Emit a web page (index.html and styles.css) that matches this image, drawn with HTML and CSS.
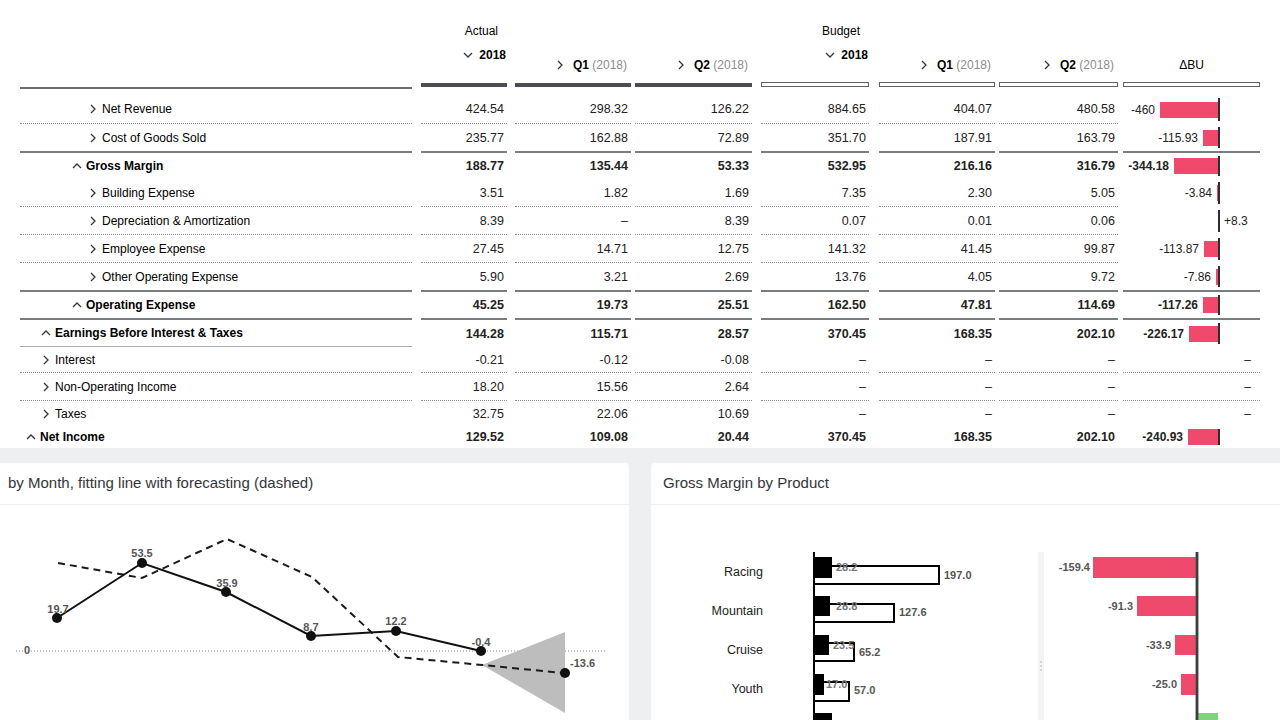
FILE: index.html
```html
<!DOCTYPE html>
<html>
<head>
<meta charset="utf-8">
<link rel="stylesheet" href="styles.css">
</head>
<body>
<div class="table">
  <div class="row hrow">
    <div class="hlabel"></div>
    <div class="hcell">
      <div class="hname">Actual</div>
      <div class="hyear"><svg class="ic dn" viewBox="0 0 12 12"><path d="M2 4l4 4 4-4"/></svg>2018</div>
      <div class="bar-a"></div>
    </div>
    <div class="hcell">
      <div class="hq"><svg class="ic" viewBox="0 0 12 12"><path d="M4 2l4 4-4 4"/></svg><b>Q1</b>&nbsp;<span class="gray">(2018)</span></div>
      <div class="bar-a"></div>
    </div>
    <div class="hcell">
      <div class="hq"><svg class="ic" viewBox="0 0 12 12"><path d="M4 2l4 4-4 4"/></svg><b>Q2</b>&nbsp;<span class="gray">(2018)</span></div>
      <div class="bar-a"></div>
    </div>
    <div class="hcell">
      <div class="hname">Budget</div>
      <div class="hyear"><svg class="ic dn" viewBox="0 0 12 12"><path d="M2 4l4 4 4-4"/></svg>2018</div>
      <div class="bar-b"></div>
    </div>
    <div class="hcell">
      <div class="hq"><svg class="ic" viewBox="0 0 12 12"><path d="M4 2l4 4-4 4"/></svg><b>Q1</b>&nbsp;<span class="gray">(2018)</span></div>
      <div class="bar-b"></div>
    </div>
    <div class="hcell">
      <div class="hq"><svg class="ic" viewBox="0 0 12 12"><path d="M4 2l4 4-4 4"/></svg><b>Q2</b>&nbsp;<span class="gray">(2018)</span></div>
      <div class="bar-b"></div>
    </div>
    <div class="hcell">
      <div class="hq hc">ΔBU</div>
      <div class="bar-b"></div>
    </div>
  </div>

  <div class="row r1 dot">
    <div class="lbl l3"><svg class="ic" viewBox="0 0 12 12"><path d="M4 2l4 4-4 4"/></svg>Net Revenue</div>
    <div class="c">424.54</div><div class="c">298.32</div><div class="c">126.22</div>
    <div class="c">884.65</div><div class="c">404.07</div><div class="c">480.58</div>
    <div class="d nb"><div class="neg"><span>-460</span><i class="bar" style="width:58px"></i></div><b class="axis"></b><div class="pos"></div></div>
  </div>

  <div class="row r2 sol">
    <div class="lbl l3"><svg class="ic" viewBox="0 0 12 12"><path d="M4 2l4 4-4 4"/></svg>Cost of Goods Sold</div>
    <div class="c">235.77</div><div class="c">162.88</div><div class="c">72.89</div>
    <div class="c">351.70</div><div class="c">187.91</div><div class="c">163.79</div>
    <div class="d"><div class="neg"><span>-115.93</span><i class="bar" style="width:15px"></i></div><b class="axis"></b><div class="pos"></div></div>
  </div>

  <div class="row r3 bold">
    <div class="lbl l2"><svg class="ic" viewBox="0 0 12 12"><path d="M2 8l4-4 4 4"/></svg>Gross Margin</div>
    <div class="c">188.77</div><div class="c">135.44</div><div class="c">53.33</div>
    <div class="c">532.95</div><div class="c">216.16</div><div class="c">316.79</div>
    <div class="d"><div class="neg"><span>-344.18</span><i class="bar" style="width:44px"></i></div><b class="axis"></b><div class="pos"></div></div>
  </div>

  <div class="row r4 dot">
    <div class="lbl l3"><svg class="ic" viewBox="0 0 12 12"><path d="M4 2l4 4-4 4"/></svg>Building Expense</div>
    <div class="c">3.51</div><div class="c">1.82</div><div class="c">1.69</div>
    <div class="c">7.35</div><div class="c">2.30</div><div class="c">5.05</div>
    <div class="d nb"><div class="neg"><span>-3.84</span><i class="bar" style="width:1px"></i></div><b class="axis"></b><div class="pos"></div></div>
  </div>

  <div class="row r4 dot">
    <div class="lbl l3"><svg class="ic" viewBox="0 0 12 12"><path d="M4 2l4 4-4 4"/></svg>Depreciation &amp; Amortization</div>
    <div class="c">8.39</div><div class="c">–</div><div class="c">8.39</div>
    <div class="c">0.07</div><div class="c">0.01</div><div class="c">0.06</div>
    <div class="d nb"><div class="neg"></div><b class="axis"></b><div class="pos"><span>+8.3</span></div></div>
  </div>

  <div class="row r4 dot">
    <div class="lbl l3"><svg class="ic" viewBox="0 0 12 12"><path d="M4 2l4 4-4 4"/></svg>Employee Expense</div>
    <div class="c">27.45</div><div class="c">14.71</div><div class="c">12.75</div>
    <div class="c">141.32</div><div class="c">41.45</div><div class="c">99.87</div>
    <div class="d nb"><div class="neg"><span>-113.87</span><i class="bar" style="width:14px"></i></div><b class="axis"></b><div class="pos"></div></div>
  </div>

  <div class="row r7 sol">
    <div class="lbl l3"><svg class="ic" viewBox="0 0 12 12"><path d="M4 2l4 4-4 4"/></svg>Other Operating Expense</div>
    <div class="c">5.90</div><div class="c">3.21</div><div class="c">2.69</div>
    <div class="c">13.76</div><div class="c">4.05</div><div class="c">9.72</div>
    <div class="d"><div class="neg"><span>-7.86</span><i class="bar" style="width:2px"></i></div><b class="axis"></b><div class="pos"></div></div>
  </div>

  <div class="row r8 sol bold">
    <div class="lbl l2"><svg class="ic" viewBox="0 0 12 12"><path d="M2 8l4-4 4 4"/></svg>Operating Expense</div>
    <div class="c">45.25</div><div class="c">19.73</div><div class="c">25.51</div>
    <div class="c">162.50</div><div class="c">47.81</div><div class="c">114.69</div>
    <div class="d"><div class="neg"><span>-117.26</span><i class="bar" style="width:15px"></i></div><b class="axis"></b><div class="pos"></div></div>
  </div>

  <div class="row r9 bold">
    <div class="lbl l1 thin"><svg class="ic" viewBox="0 0 12 12"><path d="M2 8l4-4 4 4"/></svg>Earnings Before Interest &amp; Taxes</div>
    <div class="c">144.28</div><div class="c">115.71</div><div class="c">28.57</div>
    <div class="c">370.45</div><div class="c">168.35</div><div class="c">202.10</div>
    <div class="d"><div class="neg"><span>-226.17</span><i class="bar" style="width:29px"></i></div><b class="axis"></b><div class="pos"></div></div>
  </div>

  <div class="row r10 dot">
    <div class="lbl l1"><svg class="ic" viewBox="0 0 12 12"><path d="M4 2l4 4-4 4"/></svg>Interest</div>
    <div class="c">-0.21</div><div class="c">-0.12</div><div class="c">-0.08</div>
    <div class="c">–</div><div class="c">–</div><div class="c">–</div>
    <div class="d dash">–</div>
  </div>

  <div class="row r11 dot">
    <div class="lbl l1"><svg class="ic" viewBox="0 0 12 12"><path d="M4 2l4 4-4 4"/></svg>Non-Operating Income</div>
    <div class="c">18.20</div><div class="c">15.56</div><div class="c">2.64</div>
    <div class="c">–</div><div class="c">–</div><div class="c">–</div>
    <div class="d dash">–</div>
  </div>

  <div class="row r12">
    <div class="lbl l1"><svg class="ic" viewBox="0 0 12 12"><path d="M4 2l4 4-4 4"/></svg>Taxes</div>
    <div class="c">32.75</div><div class="c">22.06</div><div class="c">10.69</div>
    <div class="c">–</div><div class="c">–</div><div class="c">–</div>
    <div class="d dash">–</div>
  </div>

  <div class="row r13 bold">
    <div class="lbl l0"><svg class="ic" viewBox="0 0 12 12"><path d="M2 8l4-4 4 4"/></svg>Net Income</div>
    <div class="c">129.52</div><div class="c">109.08</div><div class="c">20.44</div>
    <div class="c">370.45</div><div class="c">168.35</div><div class="c">202.10</div>
    <div class="d"><div class="neg"><span>-240.93</span><i class="bar" style="width:30px"></i></div><b class="axis"></b><div class="pos"></div></div>
  </div>
</div>

<div class="bottom">
  <div class="card card-left">
    <div class="card-head">by Month, fitting line with forecasting (dashed)</div>
    <svg class="chart" width="639" height="215" viewBox="-10 505 639 215">
      <line x1="16" y1="651" x2="607" y2="651" class="zero"/>
      <text x="27" y="654" class="vl" text-anchor="middle">0</text>
      <polygon points="482,665 565,632 565,713" fill="#bdbdbd"/>
      <polyline points="58,563 142,578 227,539 312,577 398,657 482,665 563,673" class="dash-line"/>
      <polyline points="57,618 142,563 226,592 311,636 396,631 481,651" class="solid-line"/>
      <g fill="#111">
        <circle cx="57" cy="618" r="5"/><circle cx="142" cy="563" r="5"/><circle cx="226" cy="592" r="5"/>
        <circle cx="311" cy="636" r="5"/><circle cx="396" cy="631" r="5"/><circle cx="481" cy="651" r="5"/>
        <circle cx="565" cy="673" r="5"/>
      </g>
      <g class="vl" text-anchor="middle">
        <text x="58" y="613">19.7</text><text x="142" y="557">53.5</text><text x="227" y="587">35.9</text>
        <text x="311" y="631">8.7</text><text x="396" y="625">12.2</text><text x="481" y="646">-0.4</text>
      </g>
      <text x="570" y="667" class="vl">-13.6</text>
    </svg>
  </div>
  <div class="card card-right">
    <div class="card-head">Gross Margin by Product</div>
    <svg class="chart" width="650" height="215" viewBox="651 505 650 215">
      <g class="cat" text-anchor="end">
        <text x="763" y="576">Racing</text><text x="763" y="615">Mountain</text>
        <text x="763" y="654">Cruise</text><text x="763" y="693">Youth</text>
      </g>
      <g fill="#fff" stroke="#000" stroke-width="2">
        <rect x="814" y="566" width="125" height="18"/>
        <rect x="814" y="604" width="80" height="18"/>
        <rect x="814" y="643" width="40" height="18"/>
        <rect x="814" y="682" width="35" height="19"/>
      </g>
      <g fill="#000">
        <rect x="814" y="557" width="18" height="21"/>
        <rect x="814" y="596" width="16" height="20"/>
        <rect x="814" y="635" width="15" height="20"/>
        <rect x="814" y="674" width="10" height="21"/>
        <rect x="814" y="713" width="18" height="20"/>
      </g>
      <line x1="814" y1="552" x2="814" y2="720" stroke="#000" stroke-width="2"/>
      <g class="vl in">
        <text x="836" y="571">28.2</text><text x="836" y="610">28.8</text>
        <text x="833" y="649">23.5</text><text x="826" y="688">17.0</text>
      </g>
      <g class="vl">
        <text x="944" y="579">197.0</text><text x="899" y="616">127.6</text>
        <text x="859" y="656">65.2</text><text x="854" y="694">57.0</text>
      </g>
      <rect x="1038" y="552" width="6" height="168" fill="#f4f4f4"/>
      <g fill="#c4c4c4"><circle cx="1041" cy="662" r="0.9"/><circle cx="1041" cy="666" r="0.9"/><circle cx="1041" cy="670" r="0.9"/></g>
      <g fill="#ef4a6c">
        <rect x="1093" y="557" width="104" height="21"/>
        <rect x="1137" y="596" width="60" height="20"/>
        <rect x="1175" y="635" width="22" height="20"/>
        <rect x="1181" y="674" width="16" height="21"/>
      </g>
      <rect x="1198" y="713" width="20" height="20" fill="#7dd47a"/>
      <line x1="1197" y1="552" x2="1197" y2="720" stroke="#5a5a5a" stroke-width="3"/>
      <line x1="1197" y1="552" x2="1197" y2="720" stroke="#222" stroke-width="1"/>
      <g class="vl" text-anchor="end">
        <text x="1090" y="571">-159.4</text><text x="1133" y="610">-91.3</text>
        <text x="1171" y="649">-33.9</text><text x="1177" y="688">-25.0</text>
      </g>
    </svg>
  </div>
</div>
</body>
</html>
```

FILE: styles.css
```css
* { box-sizing: border-box; }
html, body { margin: 0; padding: 0; }
body {
  width: 1280px;
  height: 720px;
  overflow: hidden;
  background: #edeff0;
  font-family: "Liberation Sans", Arial, sans-serif;
  color: #32363a;
}
.table {
  background: #fff;
  height: 448px;
  padding-left: 20px;
}
.row {
  display: grid;
  grid-template-columns: 392px 95px 124px 121px 117px 126px 123px 142px;
}
.row > :nth-child(2) { margin-left: 9px; }
.row > :nth-child(3) { margin-left: 8px; }
.row > :nth-child(4) { margin-left: 4px; }
.row > :nth-child(5) { margin-left: 9px; }
.row > :nth-child(6) { margin-left: 10px; }
.row > :nth-child(7) { margin-left: 4px; }
.row > :nth-child(8) { margin-left: 5px; }

/* header */
.hrow { height: 89px; }
.hlabel { border-bottom: 2px solid #6a6d70; }
.hcell {
  display: flex;
  flex-direction: column;
  justify-content: flex-end;
  padding-bottom: 2px;
  font-size: 12px;
  color: #000;
}
.hname { height: 24px; line-height: 24px; text-align: right; padding-right: 9px; }
.hyear {
  height: 24px; display: flex; align-items: center; justify-content: flex-end;
  padding-right: 1px; margin-bottom: 16px; font-weight: bold;
}
.hq {
  height: 24px; display: flex; align-items: center; justify-content: flex-end;
  padding-right: 4px; margin-bottom: 6px;
}
.hq .ic { margin-right: 7px; }
.hq.hc { justify-content: center; padding-right: 0; }
.gray { color: #8a8d90; }
.bar-a { height: 4px; background: #4b4d55; }
.bar-b { height: 5px; margin-top: -1px; border: 1px solid #5d6066; background: #fff; }

.ic {
  width: 12px; height: 12px; flex: none;
  fill: none; stroke: #32363a; stroke-width: 1.3;
  margin-right: 3px;
}
.ic.dn { margin-right: 5px; }

/* body rows */
.lbl {
  display: flex; align-items: center;
  font-size: 12px; color: #000;
}
.l0 { padding-left: 5px; }
.l1 { padding-left: 20px; }
.l2 { padding-left: 51px; }
.l3 { padding-left: 67px; }
.c {
  display: flex; align-items: center; justify-content: flex-end;
  padding-right: 3px; font-size: 12.5px; color: #222;
}
.bold { font-weight: bold; }

.r1 { height: 35px; }
.r1 > * { padding-top: 6px; }
.r2 { height: 29px; }
.r3 { height: 26px; }
.r4 { height: 28px; }
.r7 { height: 29px; }
.r8 { height: 28px; }
.r9 { height: 27px; }
.r10 { height: 26px; }
.r11 { height: 28px; }
.r12 { height: 25px; }
.r13 { height: 22px; }

.dot > * { border-bottom: 1px dotted #8d8f92; }
.sol > * { border-bottom: 2px solid #7a7d80; }
.dot > .nb { border-bottom: none; }
.thin { border-bottom: 1px solid #a9abad; }

/* delta column */
.d { display: flex; align-items: center; font-size: 12px; color: #222; }
.neg { width: 95px; display: flex; align-items: center; justify-content: flex-end; height: 16px; }
.neg span { margin-right: 5px; }
.bar { display: block; height: 16px; background: #ef4a6c; }
.axis { width: 2px; align-self: stretch; margin: 3px 0; background: #2c2d30; }
.pos { flex: 1; display: flex; align-items: center; padding-left: 4px; }
.d.dash { justify-content: flex-end; padding-right: 9px; }

/* bottom cards */
.bottom {
  display: flex;
  gap: 22px;
  padding-top: 15px;
}
.card {
  background: #fff;
  border-radius: 4px;
  height: 260px;
  flex: none;
  overflow: hidden;
}
.card-left { width: 639px; margin-left: -10px; }
.card-right { width: 650px; }
.card-head {
  height: 42px;
  border-bottom: 1px solid #eceef0;
  display: flex; align-items: center;
  padding-left: 12px; padding-bottom: 2px;
  font-size: 15px; color: #32363a;
}
.card-left .card-head { padding-left: 18px; }
.chart { display: block; }
.zero { stroke: #888; stroke-width: 1; stroke-dasharray: 1 2; }
.dash-line { fill: none; stroke: #1a1a1a; stroke-width: 2; stroke-dasharray: 7 5; }
.solid-line { fill: none; stroke: #111; stroke-width: 2; }
.vl { font-family: "Liberation Sans", Arial, sans-serif; font-size: 11px; font-weight: bold; fill: #555; }
.vl.in { fill: #777; }
.cat { font-family: "Liberation Sans", Arial, sans-serif; font-size: 12.5px; fill: #222; }
```
